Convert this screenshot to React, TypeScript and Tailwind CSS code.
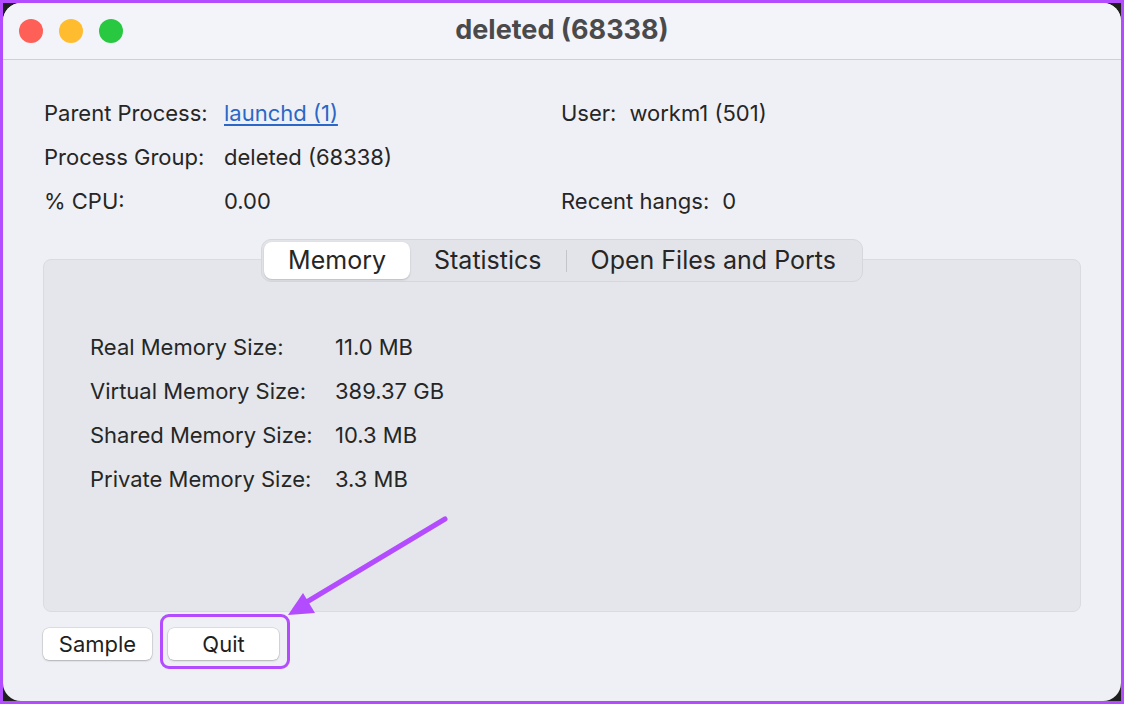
import { useState } from 'react';

const info = [
  { label: 'Parent Process:', value: 'launchd (1)', link: true, right: 'User:', rightValue: 'workm1 (501)' },
  { label: 'Process Group:', value: 'deleted (68338)' },
  { label: '% CPU:', value: '0.00', right: 'Recent hangs:', rightValue: '0' },
];

const memory = [
  ['Real Memory Size:', '11.0 MB'],
  ['Virtual Memory Size:', '389.37 GB'],
  ['Shared Memory Size:', '10.3 MB'],
  ['Private Memory Size:', '3.3 MB'],
];

const tabs = ['Memory', 'Statistics', 'Open Files and Ports'];

export default function App() {
  const [tab, setTab] = useState('Memory');

  return (
    <div
      className="w-[1124px] h-[704px] bg-[#b34cff] p-[3px]"
      style={{ fontFamily: 'Inter, "Noto Sans", sans-serif' }}
    >
      <div className="relative w-full h-full bg-[#1f1f1f]">
        <div className="w-full h-full rounded-[18px] bg-[#eff0f5] flex flex-col overflow-hidden">
          {/* Title bar */}
          <div className="relative h-[57px] shrink-0 bg-[#f3f4f9] border-b border-[#cfd0d5] flex items-center">
            <div className="flex items-center gap-[16px] pl-[16px] -mt-[1px]">
              <span className="w-[24px] h-[24px] rounded-full bg-[#fe5f57]" />
              <span className="w-[24px] h-[24px] rounded-full bg-[#febc2e]" />
              <span className="w-[24px] h-[24px] rounded-full bg-[#28c840]" />
            </div>
            <div className="absolute inset-0 flex items-center justify-center text-[27px] font-bold text-[#4a4a4c] -mt-[1px]">
              deleted (68338)
            </div>
          </div>

          {/* Info */}
          <div className="px-[41px] pt-[31px] text-[22px] text-[#262626]">
            {info.map((r) => (
              <div key={r.label} className="grid grid-cols-[180px_337px_1fr] h-[44px] items-center">
                <span>{r.label}</span>
                {r.link ? (
                  <span className="text-[#2b67c6] underline underline-offset-[3px]">{r.value}</span>
                ) : (
                  <span>{r.value}</span>
                )}
                <span>
                  {r.right && (
                    <>
                      {r.right}
                      <span className="ml-[13px]">{r.rightValue}</span>
                    </>
                  )}
                </span>
              </div>
            ))}
          </div>

          {/* Tabs + panel */}
          <div className="px-[40px] mt-[16px] flex flex-col">
            <div className="relative z-10 self-center flex items-center h-[43px] p-[2px] rounded-[10px] bg-[#e3e4e9] border border-[#d6d7dc] text-[25px] text-[#262626]">
              {tabs.map((t, i) => (
                <div key={t} className="flex items-center h-full">
                  {i === 2 && (
                    <span className={tab === 'Memory' ? 'w-px h-[22px] bg-[#c4c5ca]' : 'w-px h-[22px] bg-transparent'} />
                  )}
                  <button
                    onClick={() => setTab(t)}
                    className={
                      tab === t
                        ? 'h-full px-[24px] rounded-[8px] bg-white shadow-[0_1px_2px_rgba(0,0,0,0.18)]'
                        : 'h-full px-[24px]'
                    }
                  >
                    {t}
                  </button>
                </div>
              ))}
            </div>

            <div className="-mt-[23px] h-[353px] rounded-[8px] bg-[#e4e6eb] border border-[#dadbe0] pl-[46px] pt-[65px] text-[22px] text-[#262626]">
              {memory.map(([k, v]) => (
                <div key={k} className="grid grid-cols-[245px_1fr] h-[44px] items-center">
                  <span>{k}</span>
                  <span>{v}</span>
                </div>
              ))}
            </div>

            {/* Buttons */}
            <div className="flex gap-[16px] mt-[16px] text-[22px] text-[#1f1f1f]">
              <button className="w-[109px] h-[32px] rounded-[6px] bg-white shadow-[0_0_0_0.5px_rgba(0,0,0,0.15),0_1px_2px_rgba(0,0,0,0.2)]">
                Sample
              </button>
              <button className="w-[111px] h-[32px] rounded-[6px] bg-white shadow-[0_0_0_0.5px_rgba(0,0,0,0.15),0_1px_2px_rgba(0,0,0,0.2)]">
                Quit
              </button>
            </div>
          </div>
        </div>

        {/* Annotation: highlight box */}
        <div className="absolute left-[157px] top-[611px] w-[130px] h-[55px] rounded-[9px] border-[3px] border-[#b34cff]" />

        {/* Annotation: arrow */}
        <svg className="absolute left-0 top-0 pointer-events-none" width="1118" height="698" viewBox="0 0 1118 698">
          <line x1="442" y1="516" x2="302" y2="600" stroke="#b34cff" strokeWidth="5" strokeLinecap="round" />
          <polygon points="285,612 300,590 312,610" fill="#b34cff" />
        </svg>
      </div>
    </div>
  );
}
